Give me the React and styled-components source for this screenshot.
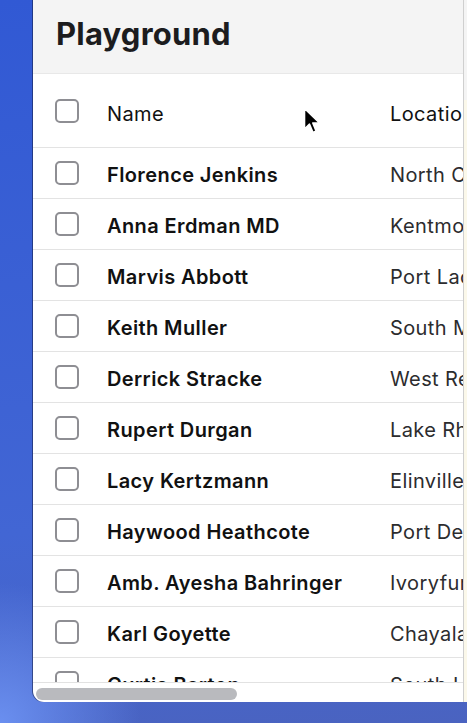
import styled, { createGlobalStyle } from 'styled-components'

const GlobalStyle = createGlobalStyle`
  html, body {
    margin: 0;
    padding: 0;
    height: 100%;
  }

  body {
    font-family: Inter, "Noto Sans", sans-serif;
    background:
      radial-gradient(circle at 0% 100%, #6a8ff0 0px, rgba(106, 143, 240, 0) 140px),
      linear-gradient(175deg, #3159d4 0%, #4266d4 70%, #4a63c0 100%);
    overflow: hidden;
  }
`;

const Desktop = styled.div`
  width: 467px;
  height: 723px;
  display: flex;
  align-items: flex-start;
`;

const Gutter = styled.div`
  width: 33px;
  flex-shrink: 0;
`;

const Window = styled.div`
  width: 430px;
  height: 702px;
  flex-shrink: 0;

  display: flex;
  flex-direction: column;

  background-color: white;
  border-right: 1px solid #cfcfcf;
  border-bottom-left-radius: 11px;
  box-shadow: -1px 0 0 rgba(20, 30, 70, 0.55);
  overflow: hidden;
`;

const SideStrip = styled.div`
  width: 3px;
  height: 702px;
  flex-shrink: 0;
  background: linear-gradient(#f4f4f4 0px, #f4f4f4 100px, #fbf8ea 100px);
`;

const TitleBar = styled.header`
  height: 74px;
  flex-shrink: 0;

  display: flex;
  align-items: center;

  padding-left: 23px;
  box-sizing: border-box;

  background-color: #f4f4f4;
  border-bottom: 1px solid #e8e8e8;
`;

const Title = styled.h1`
  margin: 0 0 6px 0;
  font-size: 31px;
  font-weight: 700;
  color: #1c1c1e;
  letter-spacing: 0.2px;
`;

const ScrollArea = styled.div`
  height: 608px;
  flex-shrink: 0;
  overflow: hidden;
  border-bottom: 1px solid #e2e2e2;
  position: relative;
`;

const Table = styled.div`
  width: 640px;
`;

const Row = styled.div`
  height: ${props => props.$header ? '74px' : '51px'};
  box-sizing: border-box;
  display: grid;
  grid-template-columns: 74px 283px 1fr;
  align-items: center;
  border-bottom: 1px solid #e3e3e3;
`;

const CheckCell = styled.div`
  padding-left: 22px;
  display: flex;
  align-items: center;
`;

const Checkbox = styled.span`
  width: 24px;
  height: 24px;
  box-sizing: border-box;
  border: 2px solid #8e8e93;
  border-radius: 5px;
  background-color: white;
`;

const Cell = styled.div`
  font-size: 20px;
  letter-spacing: 0.4px;
  font-weight: ${props => props.$bold ? 600 : 400};
  color: ${props => props.$muted ? '#2c2c2e' : '#111'};
  white-space: nowrap;
  padding-top: ${props => props.$header ? '6px' : '4px'};
`;

const Footer = styled.div`
  flex: 1;
  padding: 5px 0 0 3px;
`;

const ScrollThumb = styled.div`
  width: 201px;
  height: 12px;
  border-radius: 6px;
  background-color: #b9babe;
`;

const Cursor = styled.svg`
  position: absolute;
  left: 270px;
  top: 33px;
`;

const people = [
  { name: 'Florence Jenkins', location: 'North Chesterfort' },
  { name: 'Anna Erdman MD', location: 'Kentmouth' },
  { name: 'Marvis Abbott', location: 'Port Lacey' },
  { name: 'Keith Muller', location: 'South Meredith' },
  { name: 'Derrick Stracke', location: 'West Reyna' },
  { name: 'Rupert Durgan', location: 'Lake Rhiannon' },
  { name: 'Lacy Kertzmann', location: 'Elinville' },
  { name: 'Haywood Heathcote', location: 'Port Destiny' },
  { name: 'Amb. Ayesha Bahringer', location: 'Ivoryfurt' },
  { name: 'Karl Goyette', location: 'Chayalake' },
  { name: 'Curtis Barton', location: 'South Lonnie' },
];

const App = () => {
  return (
    <>
      <GlobalStyle />
      <Desktop>
        <Gutter />
        <Window>
          <TitleBar>
            <Title>Playground</Title>
          </TitleBar>
          <ScrollArea>
            <Table>
              <Row $header>
                <CheckCell><Checkbox /></CheckCell>
                <Cell $header>Name</Cell>
                <Cell $header>Location</Cell>
              </Row>
              {people.map((person, i) => (
                <Row key={i}>
                  <CheckCell><Checkbox /></CheckCell>
                  <Cell $bold>{person.name}</Cell>
                  <Cell $muted>{person.location}</Cell>
                </Row>
              ))}
            </Table>
            <Cursor width="18" height="28" viewBox="0 0 18 28">
              <path d="M1.5 1.5 L1.5 22 L6.5 17.2 L10 25.5 L13.2 24.1 L9.8 16 L16.5 16 Z" fill="#000" stroke="#fff" strokeWidth="1.6" strokeLinejoin="round" />
            </Cursor>
          </ScrollArea>
          <Footer>
            <ScrollThumb />
          </Footer>
        </Window>
        <SideStrip />
      </Desktop>
    </>
  )
}

export default App
